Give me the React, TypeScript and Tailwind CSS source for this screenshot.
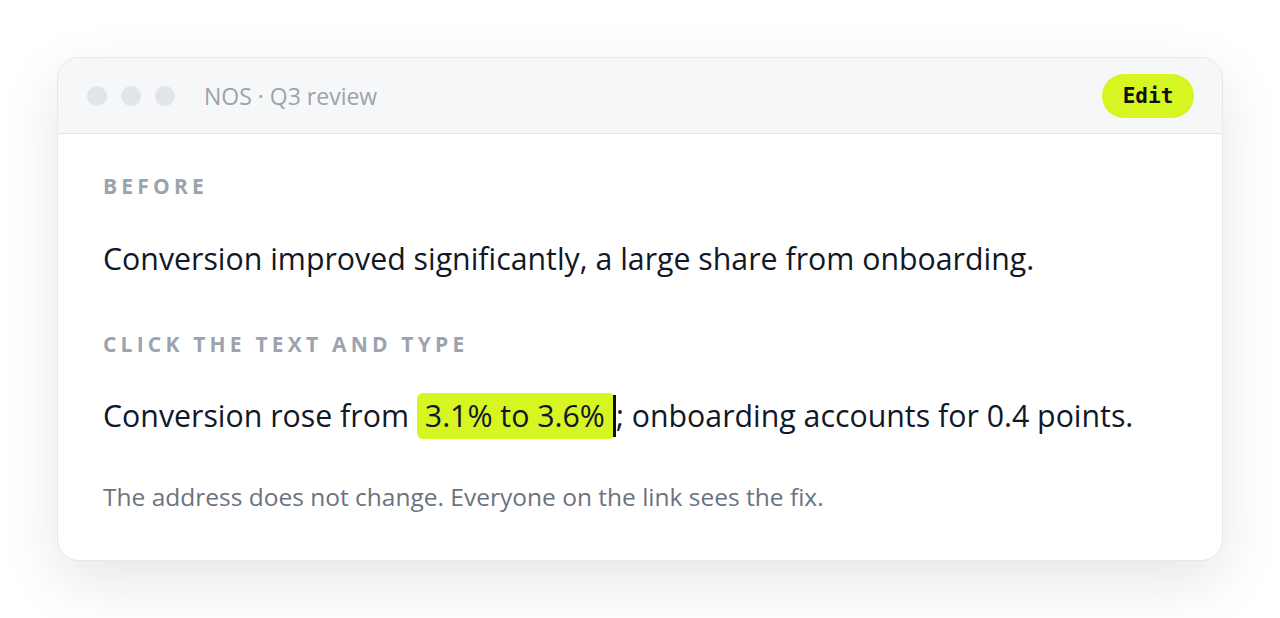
export default function App() {
  return (
    <div
      className="flex h-[618px] w-full items-start justify-center bg-white pt-[57px]"
      style={{ fontFamily: '"Open Sans", "Noto Sans", sans-serif' }}
    >
      <div className="w-[1166px] overflow-hidden rounded-[22px] border border-[#e5e7eb] bg-white shadow-[0_20px_60px_rgba(0,0,0,0.10)]">
        {/* title bar */}
        <div className="flex h-[76px] items-center border-b border-[#e3e5e8] bg-[#f6f7f8] pl-[29px] pr-[28px]">
          <div className="flex gap-[14px]">
            <span className="size-5 rounded-full bg-[#e1e4e8]" />
            <span className="size-5 rounded-full bg-[#e1e4e8]" />
            <span className="size-5 rounded-full bg-[#e1e4e8]" />
          </div>
          <span className="ml-[29px] pt-[2px] text-[23px] text-[#9ca3af]">NOS · Q3 review</span>
          <button
            className="ml-auto flex h-[44px] w-[92px] items-center justify-center rounded-full bg-[#d7f520] pt-[3px] text-[21px] font-bold text-[#111]"
            style={{ fontFamily: '"DejaVu Sans Mono", monospace' }}
          >
            Edit
          </button>
        </div>

        {/* body */}
        <div className="px-[45px] pb-[50px] pt-[42px]">
          <div className="text-[21px] font-bold uppercase leading-none tracking-[0.2em] text-[#9ca3af]">
            Before
          </div>
          <p className="mt-[47px] text-[30.3px] leading-none text-[#111827]">
            Conversion improved significantly, a large share from onboarding.
          </p>
          <div className="mt-[60px] text-[21px] font-bold uppercase leading-none tracking-[0.2em] text-[#9ca3af]">
            Click the text and type
          </div>
          <p className="mt-[38px] flex items-center text-[30.3px] leading-none text-[#111827]">
            <span className="whitespace-pre">Conversion rose from </span>
            <span className="flex h-[46px] items-center rounded-[6px] bg-[#d7f520] pl-[8px] pr-[10px]">
              3.1% to 3.6%
            </span>
            <span className="-ml-[2px] h-[42px] w-[3px] bg-[#111]" />
            <span className="whitespace-pre">; onboarding accounts for 0.4 points.</span>
          </p>
          <p className="mt-[46px] text-[24.5px] leading-none text-[#6b7280]">
            The address does not change. Everyone on the link sees the fix.
          </p>
        </div>
      </div>
    </div>
  );
}
